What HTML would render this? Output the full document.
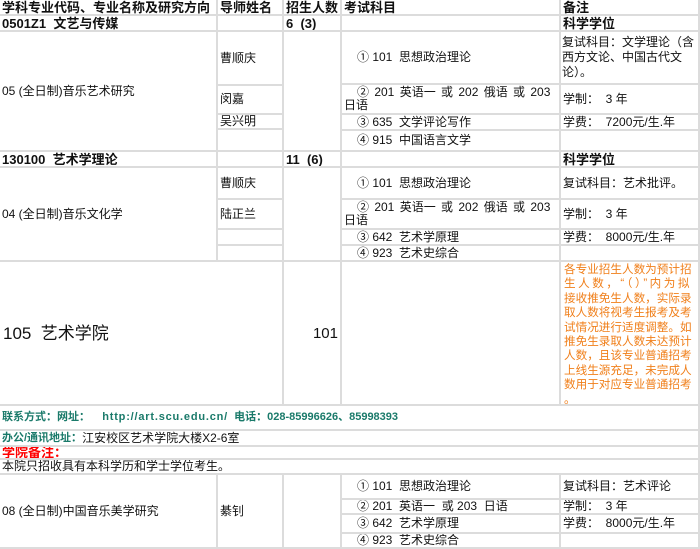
<!DOCTYPE html>
<html><head><meta charset="utf-8"><style>
body{margin:0;width:700px;height:549px;background:#fff;position:relative;overflow:hidden;font-family:"Liberation Sans","Noto Sans CJK SC",sans-serif;font-size:12px;color:#111}
.c{position:absolute;box-sizing:border-box;border-right:2px solid #dcdcdc;border-bottom:2px solid #dcdcdc;display:flex;align-items:center;padding:0 2px;line-height:13px;white-space:nowrap;overflow:hidden}
.b{font-weight:bold;font-size:13px}
.t{align-items:flex-start}
</style></head><body>
<div class="c b" style="left:0;top:0;width:218px;height:16px">学科专业代码、专业名称及研究方向</div>
<div class="c b" style="left:218px;top:0;width:66px;height:16px">导师姓名</div>
<div class="c b" style="left:284px;top:0;width:58px;height:16px">招生人数</div>
<div class="c b" style="left:342px;top:0;width:219px;height:16px">考试科目</div>
<div class="c b" style="left:561px;top:0;width:139px;height:16px">备注</div>
<div class="c b" style="left:0;top:16px;width:218px;height:16px">0501Z1&nbsp; 文艺与传媒</div>
<div class="c" style="left:218px;top:16px;width:66px;height:16px"></div>
<div class="c b" style="left:284px;top:16px;width:58px;height:16px">6&nbsp;&nbsp;(3)</div>
<div class="c" style="left:342px;top:16px;width:219px;height:16px"></div>
<div class="c b" style="left:561px;top:16px;width:139px;height:16px">科学学位</div>
<div class="c" style="left:0;top:32px;width:218px;height:120px">05 (全日制)音乐艺术研究</div>
<div class="c" style="left:218px;top:32px;width:66px;height:54px">曹顺庆</div>
<div class="c" style="left:218px;top:86px;width:66px;height:29px">闵嘉</div>
<div class="c" style="left:218px;top:115px;width:66px;height:15px">吴兴明</div>
<div class="c" style="left:218px;top:130px;width:66px;height:22px"></div>
<div class="c" style="left:284px;top:32px;width:58px;height:120px"></div>
<div class="c" style="left:342px;top:32px;width:219px;height:53px;padding-left:15px">①&nbsp;101&nbsp; 思想政治理论</div>
<div class="c" style="left:342px;top:85px;width:219px;height:30px"><div><span style="padding-left:13px;word-spacing:2px">② 201 英语一 或 202 俄语 或 203</span><br>日语</div></div>
<div class="c" style="left:342px;top:115px;width:219px;height:16px;padding-left:15px">③&nbsp;635&nbsp; 文学评论写作</div>
<div class="c" style="left:342px;top:131px;width:219px;height:21px;padding-left:15px">④&nbsp;915&nbsp; 中国语言文学</div>
<div class="c" style="left:561px;top:32px;width:139px;height:53px;padding:0 1px;line-height:15px"><div>复试科目：文学理论（含<br>西方文论、中国古代文<br>论）。</div></div>
<div class="c" style="left:561px;top:85px;width:139px;height:30px">学制：&nbsp;&nbsp;3 年</div>
<div class="c" style="left:561px;top:115px;width:139px;height:16px">学费：&nbsp;&nbsp;7200元/生.年</div>
<div class="c" style="left:561px;top:131px;width:139px;height:21px"></div>
<div class="c b" style="left:0;top:152px;width:218px;height:16px">130100&nbsp; 艺术学理论</div>
<div class="c" style="left:218px;top:152px;width:66px;height:16px"></div>
<div class="c b" style="left:284px;top:152px;width:58px;height:16px">11&nbsp;&nbsp;(6)</div>
<div class="c" style="left:342px;top:152px;width:219px;height:16px"></div>
<div class="c b" style="left:561px;top:152px;width:139px;height:16px">科学学位</div>
<div class="c" style="left:0;top:168px;width:218px;height:94px">04 (全日制)音乐文化学</div>
<div class="c" style="left:218px;top:168px;width:66px;height:32px">曹顺庆</div>
<div class="c" style="left:218px;top:200px;width:66px;height:30px">陆正兰</div>
<div class="c" style="left:218px;top:230px;width:66px;height:16px"></div>
<div class="c" style="left:218px;top:246px;width:66px;height:16px"></div>
<div class="c" style="left:284px;top:168px;width:58px;height:94px"></div>
<div class="c" style="left:342px;top:168px;width:219px;height:32px;padding-left:15px">①&nbsp;101&nbsp; 思想政治理论</div>
<div class="c" style="left:342px;top:200px;width:219px;height:30px"><div><span style="padding-left:13px;word-spacing:2px">② 201 英语一 或 202 俄语 或 203</span><br>日语</div></div>
<div class="c" style="left:342px;top:230px;width:219px;height:16px;padding-left:15px">③&nbsp;642&nbsp; 艺术学原理</div>
<div class="c" style="left:342px;top:246px;width:219px;height:16px;padding-left:15px">④&nbsp;923&nbsp; 艺术史综合</div>
<div class="c" style="left:561px;top:168px;width:139px;height:32px">复试科目：艺术批评。</div>
<div class="c" style="left:561px;top:200px;width:139px;height:30px">学制：&nbsp;&nbsp;3 年</div>
<div class="c" style="left:561px;top:230px;width:139px;height:16px">学费：&nbsp;&nbsp;8000元/生.年</div>
<div class="c" style="left:561px;top:246px;width:139px;height:16px"></div>
<div class="c" style="left:0;top:262px;width:284px;height:144px;font-size:17px;padding-left:3px">105&nbsp; 艺术学院</div>
<div class="c" style="left:284px;top:262px;width:58px;height:144px;font-size:15px;justify-content:flex-end">101</div>
<div class="c" style="left:342px;top:262px;width:219px;height:144px"></div>
<div class="c t" style="left:561px;top:262px;width:139px;height:144px;color:#f07f1a;padding:1px 0 0 3px;line-height:14.4px;font-size:11.6px"><div>各专业招生人数为预计招<br><span style="letter-spacing:2.5px">生人数，“（）”内为拟</span><br>接收推免生人数，实际录<br>取人数将视考生报考及考<br>试情况进行适度调整。如<br>推免生录取人数未达预计<br>人数，且该专业普通招考<br>上线生源充足，未完成人<br>数用于对应专业普通招考<br>。</div></div>
<div class="c b" style="left:0;top:406px;width:700px;height:25px;color:#1a7a6a;font-size:11px">联系方式：网址：&nbsp;&nbsp;&nbsp;&nbsp;<span style="letter-spacing:0.8px">http://art.scu.edu.cn/</span>&nbsp;&nbsp;电话：028-85996626、85998393</div>
<div class="c" style="left:0;top:431px;width:700px;height:16px"><b style="color:#1a7a6a;font-size:11px">办公/通讯地址：</b>江安校区艺术学院大楼X2-6室</div>
<div class="c b" style="left:0;top:447px;width:700px;height:13px;color:#f00">学院备注：</div>
<div class="c" style="left:0;top:460px;width:700px;height:15px">本院只招收具有本科学历和学士学位考生。</div>
<div class="c" style="left:0;top:475px;width:218px;height:74px">08 (全日制)中国音乐美学研究</div>
<div class="c" style="left:218px;top:475px;width:66px;height:74px">綦钊</div>
<div class="c" style="left:284px;top:475px;width:58px;height:74px"></div>
<div class="c" style="left:342px;top:475px;width:219px;height:25px;padding-left:15px">①&nbsp;101&nbsp; 思想政治理论</div>
<div class="c" style="left:342px;top:500px;width:219px;height:15px;padding-left:15px">②&nbsp;201&nbsp; 英语一&nbsp; 或&nbsp;203&nbsp; 日语</div>
<div class="c" style="left:342px;top:515px;width:219px;height:19px;padding-left:15px">③&nbsp;642&nbsp; 艺术学原理</div>
<div class="c" style="left:342px;top:534px;width:219px;height:15px;padding-left:15px">④&nbsp;923&nbsp; 艺术史综合</div>
<div class="c" style="left:561px;top:475px;width:139px;height:25px">复试科目：艺术评论</div>
<div class="c" style="left:561px;top:500px;width:139px;height:15px">学制：&nbsp;&nbsp;3 年</div>
<div class="c" style="left:561px;top:515px;width:139px;height:19px">学费：&nbsp;&nbsp;8000元/生.年</div>
<div class="c" style="left:561px;top:534px;width:139px;height:15px"></div>
</body></html>
